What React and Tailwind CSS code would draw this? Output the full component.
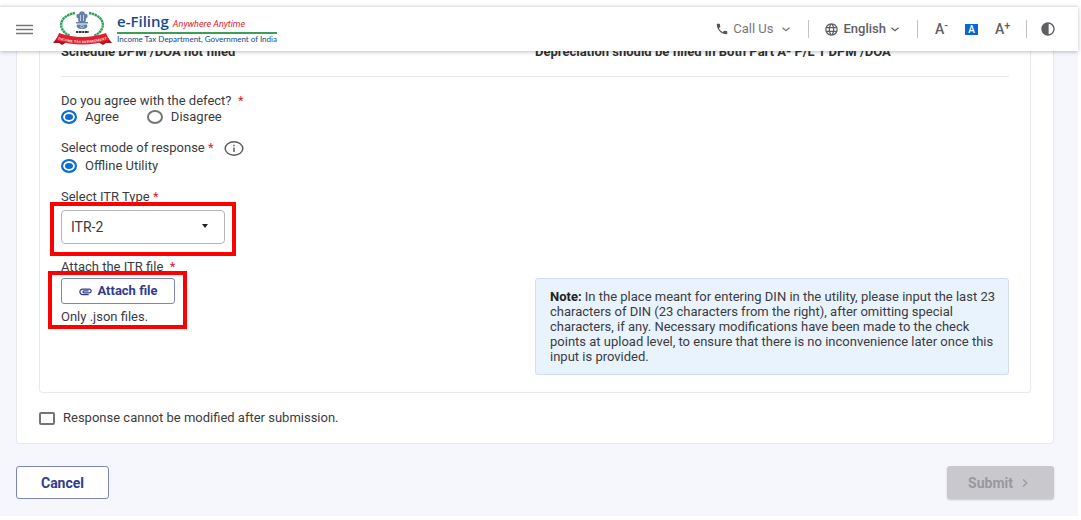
import React, { useState } from 'react';
import { MdAttachment, MdChevronRight, MdContrast, MdLanguage, MdPhone } from 'react-icons/md';

const radioClass =
    "appearance-none shrink-0 w-4 h-[14px] rounded-[50%] border-2 border-[#757575] checked:border-[#0b6bd3] checked:bg-[#0b6bd3] checked:shadow-[inset_0_0_0_2px_white]";

function Emblem() {
    return (
        <svg width="60" height="36" viewBox="0 0 60 36" aria-hidden="true">
            {/* wreath */}
            <path d="M22 3 C5 6 4 20 17 26" fill="none" stroke="#2f9e5b" strokeWidth="2.400" strokeDasharray="2.4 0.5" />
            <path d="M36 3 C53 6 54 20 41 26" fill="none" stroke="#2f9e5b" strokeWidth="2.400" strokeDasharray="2.4 0.5" />
            {/* lion capital */}
            <g fill="#6482a8">
                <circle cx="29" cy="4" r="2.800" />
                <circle cx="25.500" cy="6" r="2.200" />
                <circle cx="32.500" cy="6" r="2.200" />
                <path d="M24.500 6 H33.500 L32.500 12 H25.500 Z" />
                <rect x="23" y="12" width="12" height="1.500" />
                <path d="M24 14.500 H34 C35.500 17 33 19 29 19 C25 19 22.500 17 24 14.500 Z" />
            </g>
            <path d="M27.500 5 V11 M30.500 5 V11" stroke="#dbe5f0" strokeWidth="0.800" />
            <circle cx="29" cy="16.500" r="1.500" fill="none" stroke="#dbe5f0" strokeWidth="0.600" />
            <path d="M23 22 H36" stroke="#333" strokeWidth="1.800" strokeDasharray="2 0.6 3 0.6" />
            {/* ribbon */}
            <path d="M6 25 L0 33 L6 33 L9 35 L14 32 L9 25 Z M53 25 L59 33 L53 33 L50 35 L45 32 L50 25 Z" fill="#b5121b" />
            <path d="M6 23 Q29 31 53 23 L56 30 Q29 39 3 30 Z" fill="#e31e2d" />
            <defs>
                <path id="ribbon" d="M5 29.500 Q29 36.500 54 29.500" />
            </defs>
            <text fontFamily="Liberation Serif, serif" fontSize="3.600" fontWeight="bold" fill="white">
                <textPath href="#ribbon" startOffset="50%" textAnchor="middle">INCOME TAX DEPARTMENT</textPath>
            </text>
        </svg>
    );
}

function ChevronDown() {
    return (
        <svg width="8" height="5" viewBox="0 0 8 5" fill="none" stroke="currentColor" strokeWidth="1.200" aria-hidden="true">
            <path d="M0.500 0.800 L4 3.800 L7.500 0.800" />
        </svg>
    );
}

function Required() {
    return <span className="text-[#d0263a]">*</span>;
}

// red frame around the step the user has to fill in
function Highlight({ className, children }) {
    return (
        <div className="relative w-fit">
            {children}
            <div className={`absolute border-4 border-[#fe0000] pointer-events-none ${className}`}></div>
        </div>
    );
}

function Header() {
    return (
        <header className="relative z-10 mt-[6px] h-[45px] flex items-center justify-between border-t border-[#e4e4e6] bg-white pl-4 pr-[22px] shadow-[0_1px_4px_rgba(0,0,0,0.25)]">
            <div className="flex items-center">
                <button type="button" aria-label="Menu" className="text-[#777]">
                    <svg width="17" height="11" viewBox="0 0 17 11" stroke="currentColor" strokeWidth="1.500">
                        <path d="M0 1.500 H17 M0 5.500 H17 M0 9.500 H17" />
                    </svg>
                </button>
                <a href="#home" className="flex items-center gap-1 ml-5 pb-[2px]">
                    <Emblem />
                    <div>
                        <div className="flex items-baseline gap-1 border-b-2 border-[#3f9e55] leading-4">
                            <span className="text-[15px] font-['Open_Sans',sans-serif] font-semibold text-[#174a8c]">e-Filing</span>
                            <span className="text-[9px] italic text-[#e0182d]">Anywhere Anytime</span>
                        </div>
                        <div className="text-[8px] leading-[10px] font-[Lato,sans-serif] text-[#0f4a86]">Income Tax Department, Government of India</div>
                    </div>
                </a>
            </div>
            <div className="flex items-center text-[#5f5f63]">
                <button type="button" className="flex items-center gap-1 text-[#77777b]">
                    <MdPhone size={14} className="text-[#555]" />
                    Call Us
                    <span className="ml-1"><ChevronDown /></span>
                </button>
                <div className="w-px h-[18px] bg-[#c4c4c8] ml-[18px] mr-[15px]"></div>
                <button type="button" className="flex items-center gap-[5px] font-medium">
                    <MdLanguage size={15} />
                    English
                    <ChevronDown />
                </button>
                <div className="w-px h-[18px] bg-[#c4c4c8] ml-[18px] mr-[17px]"></div>
                <div className="flex items-center gap-[17px] font-medium text-[14px]">
                    <button type="button" aria-label="Decrease text size" className="flex items-start w-[13px]">A<span className="text-[11px] leading-[10px]">-</span></button>
                    <button type="button" aria-label="Default text size" className="w-[13px] h-[11px] bg-[#0b66d0] text-white text-[10px] leading-[11px]">A</button>
                    <button type="button" aria-label="Increase text size" className="flex items-start w-[13px]">A<span className="text-[11px] leading-[10px]">+</span></button>
                </div>
                <div className="w-px h-[18px] bg-[#c4c4c8] ml-[18px] mr-[13px]"></div>
                <button type="button" aria-label="Contrast"><MdContrast size={16} /></button>
            </div>
        </header>
    );
}

function App() {
    const [agree, setAgree] = useState('agree');
    const [itr, setItr] = useState('ITR-2');
    const [confirmed, setConfirmed] = useState(false);

    return (
        <div className="min-h-screen bg-white pr-[3px] pb-1 overflow-hidden font-[Roboto,sans-serif] text-[13px] leading-4 text-[#3c3c40]">
            <Header />
            <main className="bg-[#f5f7fc] -mt-2 pl-4 pr-6 pb-[17px]">
                <div className="bg-white border border-t-0 border-[#e6e8f3] rounded-b-[4px] px-[22px] pb-[17px]">
                    <div className="border border-t-0 border-[#e9e9f2] rounded-b-[4px] px-[21px] pt-px pb-[17px]">
                        <div className="grid grid-cols-2 pb-4 border-b border-[#e6e6ea] font-bold text-[#333]">
                            <div>Schedule DPM /DOA not filled</div>
                            <div>Depreciation should be filled in Both Part A- P/L 1 DPM /DOA</div>
                        </div>

                        <fieldset className="mt-4">
                            <legend>Do you agree with the defect? &nbsp;<Required /></legend>
                            <div className="flex gap-7">
                                <label className="flex items-center gap-2">
                                    <input type="radio" name="agree" className={radioClass} checked={agree === 'agree'} onChange={() => setAgree('agree')} />
                                    Agree
                                </label>
                                <label className="flex items-center gap-2">
                                    <input type="radio" name="agree" className={radioClass} checked={agree === 'disagree'} onChange={() => setAgree('disagree')} />
                                    Disagree
                                </label>
                            </div>
                        </fieldset>

                        <fieldset className="mt-[15px]">
                            <legend className="flex items-center gap-[10px]">
                                <span>Select mode of response <Required /></span>
                                <svg width="20" height="16" viewBox="0 0 20 16" fill="none" stroke="#5c5c60" strokeWidth="1.500" aria-hidden="true">
                                    <ellipse cx="10" cy="8.500" rx="8.800" ry="6.700" />
                                    <path d="M10 7.500 V12 M10 4.700 V6.200" />
                                </svg>
                            </legend>
                            <label className="flex items-center gap-2 mt-[2px]">
                                <input type="radio" name="mode" className={radioClass} defaultChecked />
                                Offline Utility
                            </label>
                        </fieldset>

                        <div className="grid grid-cols-2 mt-[15px]">
                            <div>
                                <label htmlFor="itr-type">Select ITR Type <Required /></label>
                                <div className="mt-[5px]">
                                    <Highlight className="-left-[11px] -right-[11px] -top-2 -bottom-3">
                                        <select
                                            id="itr-type"
                                            value={itr}
                                            onChange={(e) => setItr(e.target.value)}
                                            className="block appearance-none w-[164px] h-[34px] px-[9px] bg-white border border-[#b5b5b8] rounded-[4px] text-[14px]"
                                        >
                                            <option>ITR-2</option>
                                        </select>
                                        <svg className="absolute right-[17px] top-[14px] pointer-events-none" width="6" height="4" viewBox="0 0 6 4" aria-hidden="true">
                                            <path d="M0 0 H6 L3 4 Z" fill="#222" />
                                        </svg>
                                    </Highlight>
                                </div>

                                <label htmlFor="attach" className="block mt-[15px]">Attach the ITR file &nbsp;<Required /></label>
                                <div className="mt-[3px]">
                                    <Highlight className="-left-[13px] -right-3 -top-[7px] -bottom-1">
                                        <button id="attach" type="button" className="flex items-center justify-center gap-1 w-[114px] h-[26px] border border-[#7d85c1] rounded-[3px] font-bold text-[#2f3c8f]">
                                            <MdAttachment size={15} />
                                            Attach file
                                        </button>
                                        <p className="mt-[5px]">Only .json files.</p>
                                    </Highlight>
                                </div>
                            </div>
                            <div className="mt-[89px] border border-[#d3def0] rounded-[3px] bg-[#e9f3fd] pl-[14px] pr-3 py-[10px] leading-[15px]">
                                <b className="text-[#222]">Note:</b> In the place meant for entering DIN in the utility, please input the last 23 characters of DIN (23 characters from the right), after omitting special characters, if any. Necessary modifications have been made to the check points at upload level, to ensure that there is no inconvenience later once this input is provided.
                            </div>
                        </div>
                    </div>

                    <label className="flex items-center gap-2 mt-[17px] w-fit">
                        <input
                            type="checkbox"
                            checked={confirmed}
                            onChange={(e) => setConfirmed(e.target.checked)}
                            className="appearance-none w-4 h-[13px] border-2 border-[#757575] rounded-[2px] checked:bg-[#0b6bd3]"
                        />
                        Response cannot be modified after submission.
                    </label>
                </div>

                <div className="flex justify-between mt-[22px] font-bold text-[14px]">
                    <button type="button" className="w-[93px] h-[33px] bg-white border border-[#7d85c1] rounded-[3px] text-[#2f3c8f]">Cancel</button>
                    <button type="button" disabled className="flex items-center justify-center gap-1 w-[107px] h-[33px] rounded-[3px] bg-[#c9c8cd] text-[#98989d] shadow-[0_1px_2px_rgba(0,0,0,0.2)]">
                        Submit
                        <MdChevronRight size={16} />
                    </button>
                </div>
            </main>
        </div>
    );
}

export default App;
